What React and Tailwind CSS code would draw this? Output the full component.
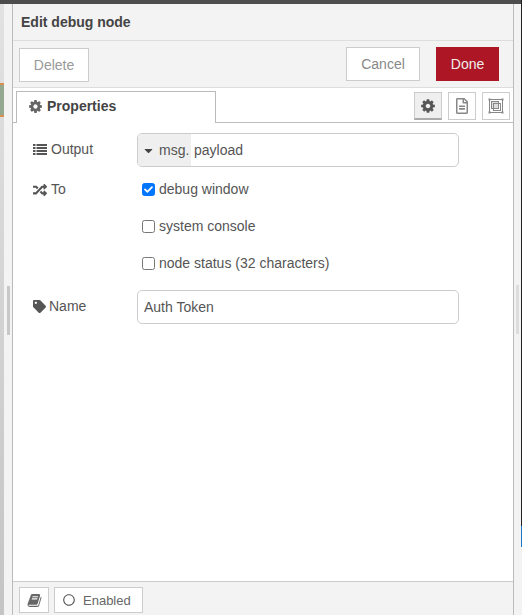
import React from "react";
import { FaCaretDown, FaCheck, FaRandom, FaRegCircle, FaRegFileAlt, FaTag } from "react-icons/fa";

const CogIcon = ({ className }) => (
  <svg viewBox="0 0 1792 1792" fill="currentColor" className={className}>
    <path d="M1152 896q0-106-75-181t-181-75-181 75-75 181 75 181 181 75 181-75 75-181zm512-109v222q0 12-8 23t-20 13l-185 28q-19 54-39 91 35 50 107 138 10 12 10 25t-9 23q-27 37-99 108t-94 71q-12 0-26-9l-138-108q-44 23-91 38-16 136-29 186-7 28-36 28h-222q-14 0-24.5-8.5t-11.5-21.5l-28-184q-49-16-90-37l-141 107q-10 9-25 9-14 0-25-11-126-114-165-168-7-10-7-23 0-12 8-23 15-21 51-66.5t54-70.5q-27-50-41-99l-183-27q-13-2-21-12.5t-8-23.5v-222q0-12 8-23t19-13l186-28q14-46 39-92-40-57-107-138-10-12-10-24 0-10 9-23 26-36 98.5-107.5t94.5-71.5q13 0 26 10l138 107q44-23 91-38 16-136 29-186 7-28 36-28h222q14 0 24.5 8.5t11.5 21.5l28 184q49 16 90 37l142-107q9-9 24-9 13 0 25 10 129 119 165 170 7 8 7 22 0 12-8 23-15 21-51 66.5t-54 70.5q26 50 41 98l183 28q13 2 21 12.5t8 23.5z" />
  </svg>
);

const BookIcon = ({ className }) => (
  <svg viewBox="0 0 1664 1792" fill="currentColor" className={className}>
    <path d="M1639 478q40 57 18 129l-275 906q-19 64-76.5 107.5t-122.5 43.5h-923q-77 0-148.5-53.5t-99.5-131.5q-24-67-2-127 0-4 3-27t4-37q1-8-3-21.5t-3-19.5q2-11 8-21t16.5-23.5 16.5-23.5q23-38 45-91.5t30-91.5q3-10 .5-30t-.5-28q3-11 17-28t17-23q21-36 42-92t25-90q1-9-2.5-32t.5-28q4-13 22-30.5t22-22.5q19-26 42.5-84.5t27.5-96.5q1-8-3-25.5t-2-26.5q2-8 9-18t18-23 17-21q8-12 16.5-30.5t15-35 16-36 19.5-32 26.5-23.5 36-11.5 47.5 5.5l-1 3q38-9 51-9h761q74 0 114 56t18 130l-274 906q-36 119-71.5 153.5t-128.5 34.5h-869q-27 0-38 15-11 16-1 43 24 70 144 70h923q29 0 56-15.5t35-41.5l300-987q7-22 5-57 38 15 59 43zm-1064 2q-4 13 2 22.5t20 9.5h608q13 0 25.5-9.5t16.5-22.5l21-64q4-13-2-22.5t-20-9.5h-608q-13 0-25.5 9.5t-16.5 22.5zm-83 256q-4 13 2 22.5t20 9.5h608q13 0 25.5-9.5t16.5-22.5l21-64q4-13-2-22.5t-20-9.5h-608q-13 0-25.5 9.5t-16.5 22.5z" />
  </svg>
);

const ListIcon = () => (
  <svg viewBox="0 0 14 11" fill="currentColor" className="h-[11px] w-[14px]">
    <rect x="0" y="0" width="2.5" height="2" />
    <rect x="3.5" y="0" width="10.5" height="2" />
    <rect x="0" y="3" width="2.5" height="2" />
    <rect x="3.5" y="3" width="10.5" height="2" />
    <rect x="0" y="6" width="2.5" height="2" />
    <rect x="3.5" y="6" width="10.5" height="2" />
    <rect x="0" y="9" width="2.5" height="2" />
    <rect x="3.5" y="9" width="10.5" height="2" />
  </svg>
);

// expand icon: frame with corner handles and two overlapping squares
const GroupIcon = () => (
  <svg viewBox="0 0 16 16" fill="none" stroke="#888" className="h-[16px] w-[16px]">
    <rect x="1.5" y="1.5" width="13" height="13" />
    <rect x="3.5" y="3.5" width="7" height="7" fill="#ddd" />
    <rect x="5.5" y="5.5" width="7" height="7" />
    <rect x="0.5" y="0.5" width="2" height="2" fill="#888" stroke="none" />
    <rect x="13.5" y="0.5" width="2" height="2" fill="#888" stroke="none" />
    <rect x="0.5" y="13.5" width="2" height="2" fill="#888" stroke="none" />
    <rect x="13.5" y="13.5" width="2" height="2" fill="#888" stroke="none" />
  </svg>
);

const Check = ({ label, checked }) => (
  <div className="flex h-[37px] items-center">
    <span
      className={`ml-[5px] flex h-[13px] w-[13px] items-center justify-center rounded-[2.5px] border ${
        checked ? "border-[#0075ff] bg-[#0075ff]" : "border-[#767676] bg-white"
      }`}
    >
      {checked && <FaCheck className="text-[9px] text-white" />}
    </span>
    <span className="ml-[4px]">{label}</span>
  </div>
);

const TabIcon = ({ active, children }) => (
  <div
    className={`flex h-[28px] w-[28px] items-center justify-center border text-[16px] ${
      active
        ? "border-[#ccc] border-b-2 border-b-[#aaa] bg-[#efefef] text-[#555]"
        : "border-[#ccc] bg-white text-[#888]"
    }`}
  >
    {children}
  </div>
);

export default function App() {
  return (
    <div className="flex h-[615px] w-[522px] overflow-hidden bg-[#f3f3f3] font-['Liberation_Sans',sans-serif] text-[14px] text-[#555]">
      <div className="flex min-w-0 flex-1 flex-col">
        <div className="h-[4px] shrink-0 bg-[#4d4d4d]" />
        <div className="flex min-h-0 flex-1">
          {/* left of the tray: bit of the canvas behind */}
          <div className="flex w-[12px] shrink-0">
            <div className="w-[4px] bg-linear-to-b from-[#e2e2e2] to-[#c4c4c4]">
              <div className="mt-[79px] h-[34px] border-y-2 border-[#d9904f] bg-[#93a88e]" />
            </div>
            <div className="flex-1 pl-[3px] pt-[282px]">
              <div className="h-[49px] w-[3px] bg-[#c8c8c8]" />
            </div>
          </div>

          <div className="flex w-[502px] shrink-0 flex-col border-x border-x-[#bbb] bg-white">
            <div className="flex h-[37px] shrink-0 items-center border-b border-[#ddd] bg-[#f3f3f3] pl-[8px] font-bold text-[#444]">
              Edit debug node
            </div>
            <div className="flex h-[47px] shrink-0 items-center justify-between border-b border-[#ddd] bg-[#f3f3f3] pl-[6px] pr-[14px]">
              <div className="mt-[2px] flex h-[34px] w-[70px] items-center justify-center border border-[#ccc] bg-white text-[#999]">
                Delete
              </div>
              <div className="flex gap-[16px]">
                <div className="flex h-[34px] w-[74px] items-center justify-center border border-[#ccc] bg-white text-[#888]">
                  Cancel
                </div>
                <div className="flex h-[34px] w-[63px] items-center justify-center bg-[#ad1625] text-[#eee]">
                  Done
                </div>
              </div>
            </div>

            <div className="flex h-[35px] shrink-0 items-end justify-between border-b border-[#bbb] pl-[3px] pr-[3px]">
              <div className="-mb-[1px] flex h-[32px] w-[200px] items-center gap-[4px] border border-b-0 border-[#bbb] bg-white pb-[2px] pl-[11px] font-bold text-[#444]">
                <CogIcon className="h-[15px] w-[15px] text-[#666]" />
                Properties
              </div>
              <div className="mb-[2px] flex gap-[6px]">
                <TabIcon active>
                  <CogIcon className="h-[16px] w-[16px]" />
                </TabIcon>
                <TabIcon>
                  <FaRegFileAlt />
                </TabIcon>
                <TabIcon>
                  <GroupIcon />
                </TabIcon>
              </div>
            </div>

            <div className="flex min-h-0 flex-1 flex-col pl-[20px] pt-[10px]">
              <div className="flex h-[34px] items-center">
                <label className="flex w-[104px] items-center gap-[4px] pb-[2px]">
                  <ListIcon />
                  Output
                </label>
                <div className="flex h-[34px] w-[322px] overflow-hidden rounded-[5px] border border-[#ccc]">
                  <div className="flex w-[53px] items-center bg-[#efefef] pl-[4px]">
                    <FaCaretDown className="text-[13px] text-[#444]" />
                    <span className="ml-[4px]">msg.</span>
                  </div>
                  <div className="flex items-center pl-[3px]">payload</div>
                </div>
              </div>
              <div className="mt-[4px] flex">
                <label className="flex h-[37px] w-[104px] items-center gap-[4px]">
                  <FaRandom className="text-[14px] text-[#555]" />
                  To
                </label>
                <div>
                  <Check checked label="debug window" />
                  <Check label="system console" />
                  <Check label="node status (32 characters)" />
                </div>
              </div>
              <div className="mt-[8px] flex h-[34px] items-center">
                <label className="flex w-[104px] items-center gap-[3px] pb-[1px]">
                  <FaTag className="text-[13px] text-[#555]" />
                  Name
                </label>
                <div className="flex h-[34px] w-[322px] items-center rounded-[5px] border border-[#ccc] pl-[6px]">
                  Auth Token
                </div>
              </div>
            </div>

            <div className="flex h-[34px] shrink-0 items-start gap-[5px] border-t border-[#ccc] bg-[#f3f3f3] pl-[6px] pt-[5px]">
              <div className="flex h-[26px] w-[30px] items-center justify-center border border-[#ccc] bg-white">
                <BookIcon className="h-[15px] w-[15px] text-[#666]" />
              </div>
              <div className="flex h-[26px] w-[89px] items-center border border-[#ccc] bg-white pl-[8px] text-[13px] text-[#666]">
                <FaRegCircle className="text-[12px] text-[#555]" />
                <span className="ml-[8px] pt-[1px]">Enabled</span>
              </div>
            </div>
          </div>

          {/* right of the tray: sidebar edge with its handle */}
          <div className="flex-1 pl-[2px] pt-[281px]">
            <div className="h-[49px] w-[3px] bg-[#ddd]" />
          </div>
        </div>
      </div>
      {/* last pixel column: the next panel peeking out */}
      <div className="flex w-[1px] shrink-0 flex-col">
        <div className="h-[526px] bg-[#222]" />
        <div className="h-[21px] bg-[#1e78c8]" />
        <div className="flex-1 bg-[#f3f3f3]" />
      </div>
    </div>
  );
}
